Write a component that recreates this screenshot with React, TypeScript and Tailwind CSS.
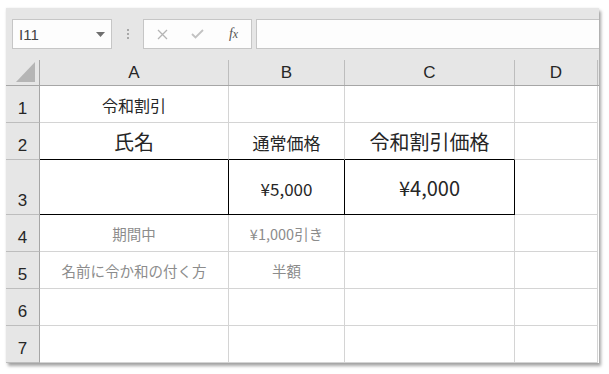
import React from 'react'

type Cell = {
  text?: string
  size?: string
  gray?: boolean
  boxed?: boolean
}

const COLS = ['A', 'B', 'C', 'D']
const WIDTHS = ['w-[189px]', 'w-[116px]', 'w-[170px]', 'w-[83px]']

const ROWS: { h: string; cells: Cell[] }[] = [
  { h: 'h-[37px]', cells: [{ text: '令和割引', size: 'text-[16px]' }, {}, {}, {}] },
  {
    h: 'h-[37px]',
    cells: [
      { text: '氏名', size: 'text-[20px]' },
      { text: '通常価格', size: 'text-[17px]' },
      { text: '令和割引価格', size: 'text-[20px]' },
      {},
    ],
  },
  {
    h: 'h-[55px]',
    cells: [
      { boxed: true },
      { text: '¥5,000', size: 'text-[17px]', boxed: true },
      { text: '¥4,000', size: 'text-[20px]', boxed: true },
      {},
    ],
  },
  {
    h: 'h-[37px]',
    cells: [
      { text: '期間中', size: 'text-[14.5px]', gray: true },
      { text: '¥1,000引き', size: 'text-[14.5px]', gray: true },
      {},
      {},
    ],
  },
  {
    h: 'h-[37px]',
    cells: [
      { text: '名前に令か和の付く方', size: 'text-[14.5px]', gray: true },
      { text: '半額', size: 'text-[14.5px]', gray: true },
      {},
      {},
    ],
  },
  { h: 'h-[37px]', cells: [{}, {}, {}, {}] },
  { h: 'h-[37px]', cells: [{}, {}, {}, {}] },
]

function FormulaBar() {
  return (
    <div className="h-[52px] bg-[#e6e6e6] flex items-start pt-[11px] pl-[6px]">
      {/* Name box */}
      <div className="w-[100px] h-[30px] bg-[#fdfdfd] border border-[#c6c6c6] flex items-center justify-between pl-[6px] pr-[6px]">
        <span className="text-[15px] text-[#444] font-['Liberation_Sans_Narrow','Liberation_Sans',sans-serif] leading-none">I11</span>
        <svg width="9" height="5" viewBox="0 0 9 5">
          <path d="M0 0 L9 0 L4.5 5 Z" fill="#6f6f6f" />
        </svg>
      </div>

      {/* separator dots */}
      <div className="w-[31px] h-[30px] flex flex-col items-center justify-center gap-[2px]">
        <span className="w-[2px] h-[2px] bg-[#a8a8a8]" />
        <span className="w-[2px] h-[2px] bg-[#a8a8a8]" />
        <span className="w-[2px] h-[2px] bg-[#a8a8a8]" />
      </div>

      {/* cancel / enter / fx */}
      <div className="w-[109px] h-[30px] bg-[#fdfdfd] border border-[#c6c6c6] flex items-center">
        <div className="w-[34px] flex justify-center pl-[2px]">
          <svg width="11" height="11" viewBox="0 0 11 11">
            <path d="M1 1 L10 10 M10 1 L1 10" stroke="#b4b4b4" strokeWidth="1.3" />
          </svg>
        </div>
        <div className="w-[38px] flex justify-center">
          <svg width="13" height="10" viewBox="0 0 13 10">
            <path d="M1 5 L4.5 8.5 L12 1" stroke="#c2c2c2" strokeWidth="1.8" fill="none" />
          </svg>
        </div>
        <div className="w-[35px] flex justify-center">
          <span className="italic text-[14px] text-[#555] font-['Liberation_Serif',serif] leading-none">
            f<span className="text-[12px]">x</span>
          </span>
        </div>
      </div>

      <div className="w-[4px]" />

      {/* formula input */}
      <div className="flex-1 h-[30px] bg-[#fdfdfd] border border-[#c6c6c6] border-r-0" />
    </div>
  )
}

function ColumnHeaders() {
  return (
    <div className="flex h-[26px] bg-[#e6e6e6] border-b border-[#a6a6a6]">
      <div className="w-[34px] h-full border-r border-[#a6a6a6] flex items-end justify-end pr-[4px] pb-[3px]">
        <svg width="19" height="20" viewBox="0 0 19 20">
          <path d="M19 0 L19 20 L0 20 Z" fill="#b5b5b5" />
        </svg>
      </div>
      {COLS.map((c, i) => (
        <div
          key={c}
          className={`${WIDTHS[i]} h-full border-r border-[#bdbdbd] flex items-center justify-center text-[17px] text-[#262626] font-['Liberation_Sans_Narrow','Liberation_Sans',sans-serif]`}
        >
          {c}
        </div>
      ))}
    </div>
  )
}

export default function App() {
  return (
    <div className="w-[609px] h-[374px] bg-white pl-[6px] pt-[8px]">
      <div className="w-[593px] h-[355px] bg-white flex flex-col shadow-[2px_3px_3px_rgba(0,0,0,0.35),0_0_2px_rgba(0,0,0,0.08)]">
        <FormulaBar />
        <ColumnHeaders />

        {ROWS.map((row, r) => (
          <div key={r} className={`flex ${row.h}`}>
            <div className="w-[34px] h-full bg-[#e6e6e6] border-r border-[#a6a6a6] border-b border-b-[#bdbdbd] flex items-end justify-center pb-[5px] text-[17px] leading-none text-[#262626] font-['Liberation_Sans_Narrow','Liberation_Sans',sans-serif]">
              {r + 1}
            </div>
            {row.cells.map((cell, i) => {
              const nextBoxed = ROWS[r + 1]?.cells[i]?.boxed
              return (
                <div
                  key={i}
                  className={[
                    WIDTHS[i],
                    'h-full border-r border-b flex items-center justify-center whitespace-nowrap pt-[2px]',
                    "font-['Noto_Sans_CJK_JP',sans-serif] leading-none",
                    cell.boxed || nextBoxed ? 'border-b-black' : 'border-b-[#d4d4d4]',
                    cell.boxed ? 'border-r-black' : 'border-r-[#d4d4d4]',
                    cell.size ?? '',
                    cell.gray ? 'text-[#8c8c8c]' : 'text-[#262626]',
                  ].join(' ')}
                >
                  {cell.text}
                </div>
              )
            })}
          </div>
        ))}
      </div>
    </div>
  )
}
